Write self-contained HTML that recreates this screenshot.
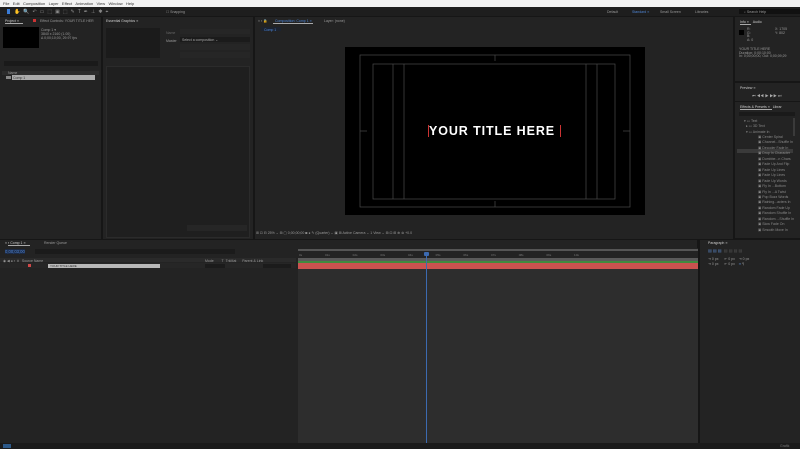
<!DOCTYPE html>
<html><head><meta charset="utf-8"><style>
*{margin:0;padding:0;box-sizing:border-box}
body{width:800px;height:449px;overflow:hidden;background:#161616;font-family:"Liberation Sans",sans-serif;font-size:3.5px;color:#9a9a9a;position:relative}
.a{position:absolute}
.p{position:absolute;background:#232323}
.t{position:absolute;white-space:nowrap}
</style></head><body>
<div class="a" style="left:0;top:0;width:800px;height:7px;background:#f2f2f2;color:#333;font-size:4px">
<span class="t" style="left:3px;top:1px">File&nbsp;&nbsp;&nbsp;Edit&nbsp;&nbsp;&nbsp;Composition&nbsp;&nbsp;&nbsp;Layer&nbsp;&nbsp;&nbsp;Effect&nbsp;&nbsp;&nbsp;Animation&nbsp;&nbsp;&nbsp;View&nbsp;&nbsp;&nbsp;Window&nbsp;&nbsp;&nbsp;Help</span></div>
<div class="a" style="left:0;top:7px;width:800px;height:9px;background:#1e1e1e"></div>
<div class="a" style="left:7px;top:9px;width:3px;height:5px;background:#3a7bd5"></div>
<div class="t" style="left:14px;top:9px;color:#8a8a8a;font-size:5px;letter-spacing:3px">✋🔍↶▭⬚▣⬚✎T✒⊥✱⌖</div>
<div class="t" style="left:166px;top:9.5px">☐ Snapping</div>
<div class="t" style="left:607px;top:10px">Default</div>
<div class="t" style="left:632px;top:10px;color:#4f86d6">Standard ≡</div>
<div class="t" style="left:660px;top:10px">Small Screen</div>
<div class="t" style="left:695px;top:10px">Libraries</div>
<div class="a" style="left:739px;top:9px;width:61px;height:5px;background:#111"></div>
<div class="t" style="left:744px;top:10px">⌕ Search Help</div>

<div class="p" style="left:0;top:17px;width:101px;height:222px"></div>
<div class="t" style="left:5px;top:19px;color:#ccc">Project ≡</div>
<div class="a" style="left:5px;top:23px;width:18px;height:1px;background:#aaa"></div>
<div class="a" style="left:33px;top:19px;width:3px;height:3px;background:#c33"></div>
<div class="t" style="left:40px;top:19px">Effect Controls: YOUR TITLE HER</div>
<div class="a" style="left:3px;top:27px;width:36px;height:21px;background:#000"></div>
<div class="t" style="left:41px;top:28px;line-height:4px">Comp 1 ▾<br>3840 x 2160 (1.00)<br>Δ 0;00;10;00, 29.97 fps</div>
<div class="a" style="left:4px;top:61px;width:94px;height:5px;background:#1a1a1a"></div>
<div class="a" style="left:2px;top:71px;width:97px;height:4px;background:#2c2c2c"></div>
<div class="t" style="left:8px;top:71px">Name</div>
<div class="a" style="left:12px;top:75px;width:83px;height:5px;background:#aaa"></div>
<div class="t" style="left:13px;top:75.5px;color:#333">Comp 1</div>
<div class="a" style="left:6px;top:76px;width:5px;height:3px;background:#888"></div>

<div class="p" style="left:103px;top:17px;width:150px;height:222px"></div>
<div class="t" style="left:106px;top:19px;color:#ccc">Essential Graphics ≡</div>
<div class="a" style="left:106px;top:28px;width:54px;height:30px;background:#1b1b1b"></div>
<div class="t" style="left:166px;top:31px;color:#666">Name</div>
<div class="a" style="left:180px;top:29px;width:70px;height:5px;background:#262626"></div>
<div class="t" style="left:166px;top:39px">Master</div>
<div class="a" style="left:180px;top:37px;width:70px;height:5px;background:#1b1b1b"></div>
<div class="t" style="left:182px;top:38px;color:#aaa">Select a composition ⌄</div>
<div class="a" style="left:180px;top:44px;width:70px;height:6px;background:#262626"></div>
<div class="a" style="left:180px;top:52px;width:70px;height:6px;background:#262626"></div>
<div class="a" style="left:106px;top:66px;width:144px;height:172px;background:#1f1f1f;border:1px solid #2b2b2b"></div>
<div class="a" style="left:187px;top:225px;width:60px;height:6px;background:#262626"></div>

<div class="p" style="left:255px;top:17px;width:478px;height:222px"></div>
<div class="t" style="left:258px;top:19px">× ▪ 🔒</div>
<div class="t" style="left:275px;top:19px;color:#4f86d6">Composition: Comp 1 ≡</div>
<div class="a" style="left:273px;top:23px;width:40px;height:1px;background:#aaa"></div>
<div class="t" style="left:324px;top:19px">Layer: (none)</div>
<div class="a" style="left:261px;top:27px;width:20px;height:4px;background:#1c2330"></div>
<div class="t" style="left:264px;top:27.5px;color:#4f86d6">Comp 1</div>
<div class="a" style="left:345px;top:47px;width:300px;height:168px;background:#000"></div>
<svg class="a" style="left:345px;top:47px" width="300" height="168" viewBox="0 0 300 168">
<g fill="none" stroke="#4a4a4a" stroke-width="0.7">
<rect x="15" y="8" width="270" height="152"/>
<rect x="28" y="17" width="242" height="135"/>
<line x1="48" y1="17" x2="48" y2="152"/><line x1="59" y1="17" x2="59" y2="152"/>
<line x1="241" y1="17" x2="241" y2="152"/><line x1="252" y1="17" x2="252" y2="152"/>
<line x1="150" y1="8" x2="150" y2="14"/><line x1="150" y1="154" x2="150" y2="160"/>
<line x1="15" y1="84" x2="22" y2="84"/><line x1="278" y1="84" x2="285" y2="84"/>
</g></svg>
<div class="t" style="left:429px;top:124px;color:#fff;font-weight:900;font-size:12.5px;letter-spacing:0.9px">YOUR TITLE HERE</div>
<div class="a" style="left:428px;top:125px;width:1px;height:12px;background:#c33"></div>
<div class="a" style="left:560px;top:125px;width:1px;height:12px;background:#c33"></div>
<div class="t" style="left:256px;top:231px;font-size:3.5px">⊞ ⊡ ⊟ 25% ⌄ ⊞ ▢ 0;00;00;00 ◙ ● ✎ (Quarter) ⌄ ▣ ⊞ Active Camera ⌄ 1 View ⌄ ⊞ ⊡ ⊞ ⊕ ⊛ +0.0</div>

<div class="p" style="left:735px;top:17px;width:65px;height:64px"></div>
<div class="t" style="left:740px;top:20px;color:#ccc">Info ≡&nbsp;&nbsp;&nbsp;&nbsp;Audio</div>
<div class="a" style="left:740px;top:24px;width:11px;height:1px;background:#aaa"></div>
<div class="a" style="left:739px;top:30px;width:5px;height:5px;background:#000"></div>
<div class="t" style="left:747px;top:28px;line-height:3.5px">R:<br>G:<br>B:<br>A: 0</div>
<div class="t" style="left:775px;top:28px;line-height:3.5px">X: 1705<br>Y: 802</div>
<div class="t" style="left:739px;top:48px;line-height:3.7px">YOUR TITLE HERE<br>Duration: 0;00;10;00<br>In: 0;00;00;00, Out: 0;00;09;29</div>
<div class="p" style="left:735px;top:83px;width:65px;height:18px"></div>
<div class="t" style="left:740px;top:86px;color:#ccc">Preview ≡</div>
<div class="t" style="left:752px;top:93px;color:#aaa;font-size:4px">⏮ ◀◀ ▶ ▶▶ ⏭</div>
<div class="p" style="left:735px;top:102px;width:65px;height:136px"></div>
<div class="t" style="left:740px;top:105px;color:#ccc">Effects &amp; Presets ≡&nbsp;&nbsp;&nbsp;Librar</div>
<div class="a" style="left:740px;top:109px;width:32px;height:1px;background:#aaa"></div>
<div class="a" style="left:739px;top:112px;width:56px;height:4px;background:#1a1a1a"></div>
<div class="a" style="left:737px;top:149px;width:56px;height:4px;background:#3a3a3a"></div>
<div class="t" style="left:744px;top:118.5px;line-height:5.5px;color:#8a8a8a">▾ ▭ Text<br>&nbsp;&nbsp;▸ ▭ 3D Text<br>&nbsp;&nbsp;▾ ▭ Animate In</div>
<div class="t" style="left:758px;top:135px;line-height:5.45px;color:#8a8a8a">▣ Center Spiral<br>▣ Channel...Shuffle In<br>▣ Decoder Fade In<br>▣ Drop In Character<br>▣ Dumbbe...n Chars<br>▣ Fade Up And Flip<br>▣ Fade Up Lines<br>▣ Fade Up Lines<br>▣ Fade Up Words<br>▣ Fly In ...Bottom<br>▣ Fly In ...A Twist<br>▣ Pop Buzz Words<br>▣ Raining...acters In<br>▣ Random Fade Up<br>▣ Random Shuffle In<br>▣ Random ...Shuffle In<br>▣ Slow Fade On<br>▣ Smooth Move In</div>
<div class="a" style="left:793px;top:118px;width:2px;height:18px;background:#3a3a3a"></div>

<div class="p" style="left:0;top:240px;width:697px;height:203px"></div>
<div class="t" style="left:5px;top:241px;color:#ccc">× ▪ Comp 1 ≡</div>
<div class="a" style="left:8px;top:245px;width:22px;height:1px;background:#aaa"></div>
<div class="t" style="left:44px;top:241px">Render Queue</div>
<div class="t" style="left:5px;top:248.5px;color:#4f86d6;font-size:4.2px;background:#1c2a44">0;00;03;00</div>
<div class="a" style="left:35px;top:249px;width:200px;height:5px;background:#1b1b1b"></div>
<div class="a" style="left:0;top:258px;width:296px;height:4px;background:#2a2a2a"></div>
<div class="t" style="left:3px;top:258.5px">◉ ◀ ● ▪ &nbsp;# &nbsp;&nbsp;Source Name</div>
<div class="t" style="left:205px;top:258.5px">Mode&nbsp;&nbsp;&nbsp;&nbsp;&nbsp;&nbsp;&nbsp;&nbsp;T&nbsp;&nbsp;TrkMat&nbsp;&nbsp;&nbsp;&nbsp;&nbsp;&nbsp;Parent &amp; Link</div>
<div class="a" style="left:0;top:263px;width:296px;height:5px;background:#262626"></div>
<div class="a" style="left:28px;top:264px;width:3px;height:3px;background:#d04848"></div>
<div class="a" style="left:48px;top:263.5px;width:112px;height:4px;background:#b8b8b8"></div>
<div class="t" style="left:50px;top:263.8px;color:#333;font-size:3px">YOUR TITLE HERE</div>
<div class="a" style="left:205px;top:263.5px;width:20px;height:4px;background:#1b1b1b"></div>
<div class="a" style="left:263px;top:263.5px;width:28px;height:4px;background:#1b1b1b"></div>
<div class="a" style="left:298px;top:248px;width:400px;height:195px;background:#2d2d2d"></div>
<div class="a" style="left:298px;top:248px;width:400px;height:10px;background:#232323"></div>
<div class="a" style="left:298px;top:249px;width:400px;height:2px;background:#555"></div>
<div class="t" style="left:299px;top:253px;color:#777;font-size:3px;word-spacing:22px">0s 01s 02s 03s 04s 05s 06s 07s 08s 09s 10s</div>
<div class="a" style="left:298px;top:258px;width:400px;height:3px;background:#5a5a5a"></div>
<div class="a" style="left:298px;top:261px;width:400px;height:2px;background:#3f8a3f"></div>
<div class="a" style="left:298px;top:263px;width:400px;height:6px;background:#c9524f"></div>
<div class="a" style="left:426px;top:252px;width:1px;height:191px;background:#3c6ab0"></div>
<div class="a" style="left:424px;top:252px;width:5px;height:4px;background:#3c6ab0;border-radius:1px"></div>
<div class="p" style="left:700px;top:240px;width:100px;height:203px"></div>
<div class="t" style="left:708px;top:241px;color:#ccc">Paragraph ≡</div>
<div class="t" style="left:708px;top:248px;color:#5a86c6;font-size:4px">▤ ▤ ▤ &nbsp;<span style="color:#555">▤ ▤ ▤ ▤</span></div>
<div class="t" style="left:708px;top:257px;line-height:5px">⇥ 0 px&nbsp;&nbsp;&nbsp;&nbsp;&nbsp;&nbsp;⇤ 0 px&nbsp;&nbsp;&nbsp;&nbsp;⇥ 0 px<br>⇥ 0 px&nbsp;&nbsp;&nbsp;&nbsp;&nbsp;&nbsp;⇤ 0 px&nbsp;&nbsp;&nbsp;&nbsp;<span style="color:#5a86c6">▪▪</span> ¶</div>
<div class="a" style="left:0;top:443px;width:800px;height:6px;background:#1b1b1b"></div>
<div class="a" style="left:3px;top:444px;width:8px;height:4px;background:#2d5a8a"></div>
<div class="t" style="left:780px;top:444px;color:#777">Grafik</div>
</body></html>
